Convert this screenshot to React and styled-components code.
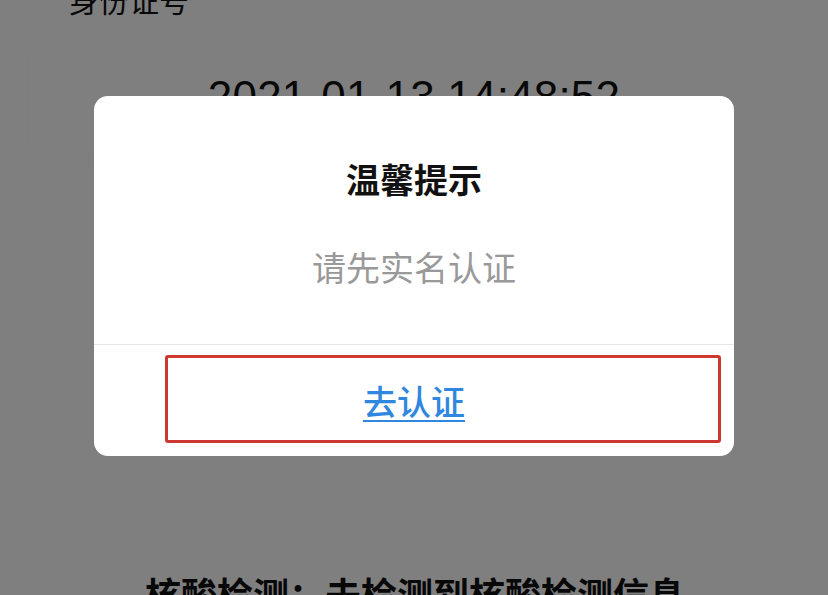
import React from "react";
import styled, { createGlobalStyle } from "styled-components";

const GlobalStyle = createGlobalStyle`
  html, body {
    margin: 0;
    padding: 0;
    background: #fff;
    font-family: "Noto Sans CJK SC", "Noto Sans", sans-serif;
  }
`;

const Page = styled.div`
  position: relative;
  width: 828px;
  height: 595px;
  overflow: hidden;
  background: #fff;
`;

const Content = styled.div`
  margin-top: -16px;
  display: flex;
  flex-direction: column;
`;

const FieldLabel = styled.div`
  padding-left: 69px;
  font-size: 30px;
  line-height: 30px;
  color: #111;
`;

const InfoCard = styled.div`
  margin: 30px 30px 0;
  padding: 31px 0 40px;
  border-radius: 14px;
  box-shadow: 0 0 8px rgba(0, 0, 0, 0.025);
  display: flex;
  justify-content: center;
`;

const DateText = styled.div`
  font-family: "Liberation Sans", Arial, sans-serif;
  font-size: 44px;
  line-height: 44px;
  color: #111;
  letter-spacing: 0.2px;
`;

const TestResult = styled.div`
  margin-top: 416px;
  padding-left: 145px;
  font-size: 36px;
  line-height: 36px;
  font-weight: 700;
  color: #111;
`;

const Overlay = styled.div`
  position: absolute;
  inset: 0;
  background: rgba(0, 0, 0, 0.5);
  display: flex;
  justify-content: center;
  align-items: flex-start;
  padding-top: 96px;
`;

const Dialog = styled.div`
  width: 640px;
  background: #fff;
  border-radius: 14px;
  display: flex;
  flex-direction: column;
  overflow: hidden;
`;

const DialogBody = styled.div`
  padding: 66px 0 60px;
  display: flex;
  flex-direction: column;
  align-items: center;
  gap: 54px;
`;

const Title = styled.div`
  font-size: 34px;
  line-height: 34px;
  font-weight: 700;
  color: #111;
`;

const Message = styled.div`
  font-size: 34px;
  line-height: 34px;
  color: #999;
`;

const Footer = styled.div`
  position: relative;
  height: 111px;
  border-top: 1px solid #e6e6e6;
  display: flex;
  align-items: center;
  justify-content: center;
`;

const ActionLink = styled.a`
  font-size: 34px;
  line-height: 34px;
  font-weight: 500;
  color: #2f87e0;
  text-decoration: underline;
  text-decoration-thickness: 2px;
  text-underline-offset: 5px;
  cursor: pointer;
`;

const Highlight = styled.div`
  position: absolute;
  left: 71px;
  right: 13px;
  top: 10px;
  bottom: 13px;
  border: 3px solid #cc3830;
  border-radius: 3px;
  pointer-events: none;
`;

export default function App() {
  return (
    <Page>
      <GlobalStyle />
      <Content>
        <FieldLabel>身份证号</FieldLabel>
        <InfoCard>
          <DateText>2021-01-13 14:48:52</DateText>
        </InfoCard>
        <TestResult>核酸检测：未检测到核酸检测信息</TestResult>
      </Content>
      <Overlay>
        <Dialog>
          <DialogBody>
            <Title>温馨提示</Title>
            <Message>请先实名认证</Message>
          </DialogBody>
          <Footer>
            <ActionLink>去认证</ActionLink>
            <Highlight />
          </Footer>
        </Dialog>
      </Overlay>
    </Page>
  );
}
